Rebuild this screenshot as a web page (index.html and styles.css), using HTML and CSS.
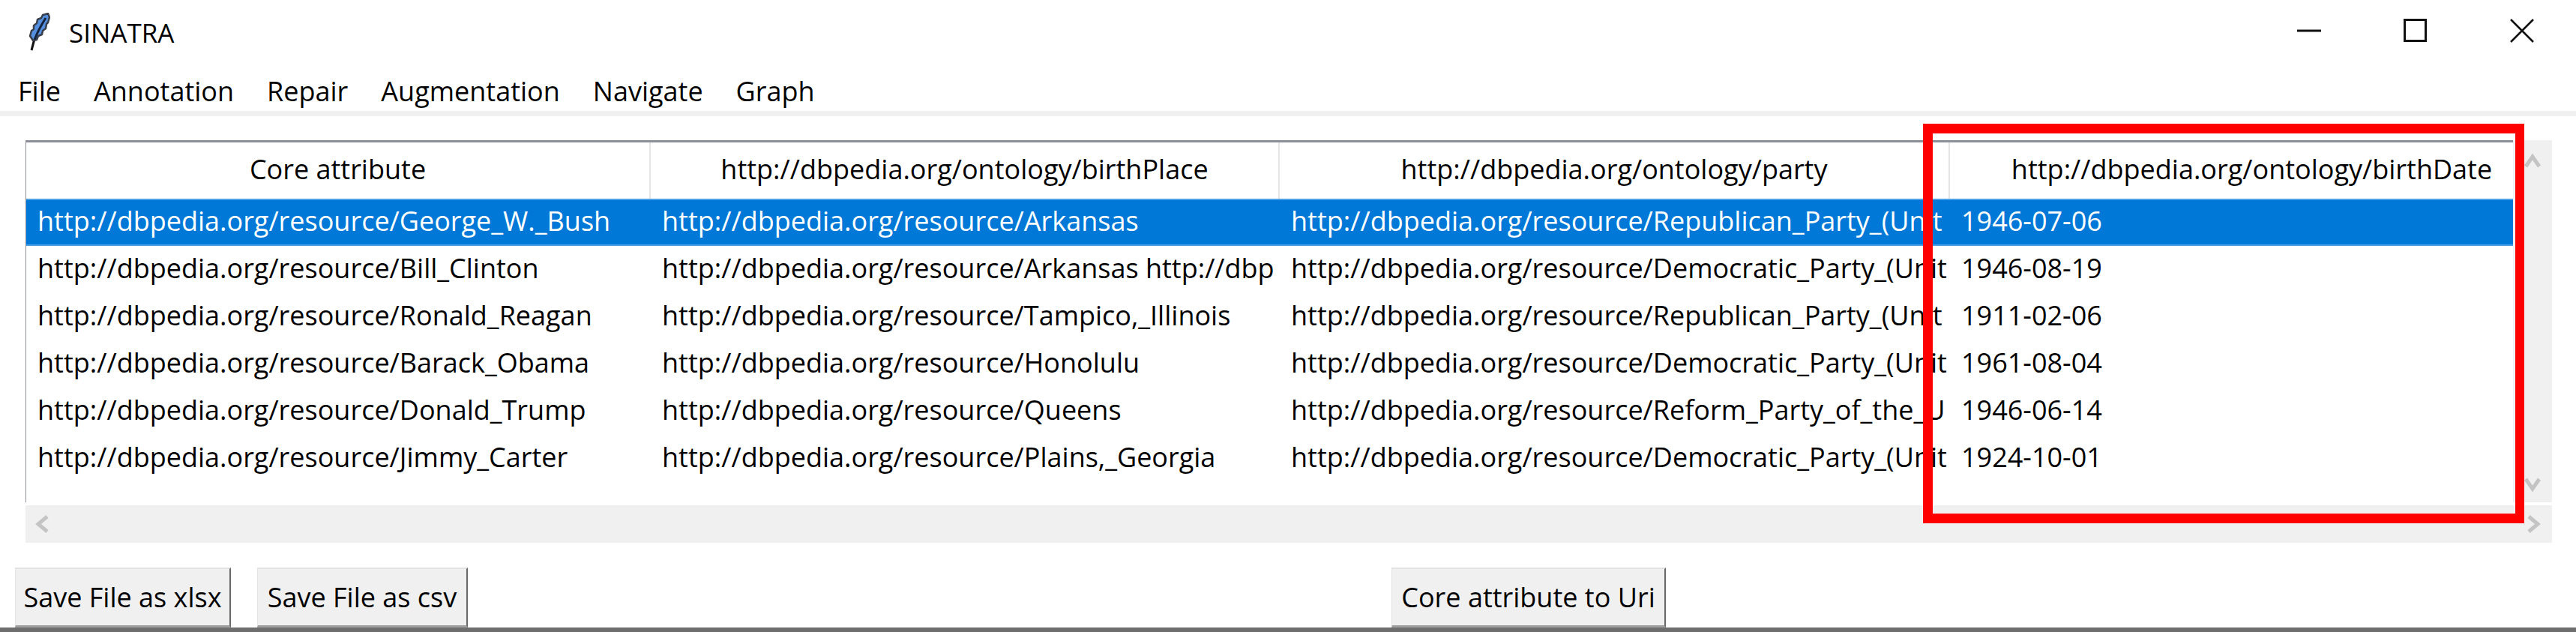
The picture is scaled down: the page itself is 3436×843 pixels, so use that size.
FILE: index.html
```html
<!DOCTYPE html>
<html lang="en">
<head>
  <meta charset="UTF-8">
  <title>SINATRA</title>
  <link rel="stylesheet" href="styles.css">
</head>
<body>
<div id="window">
  <div class="titlebar">
    <svg class="app-icon" width="30" height="52" viewBox="0 0 30 52">
      <path d="M5 50 L9 35" stroke="#111" stroke-width="3" fill="none"/>
      <path d="M7 37 L3 31 L5 24 L8 22 L8 17 L12 14 L13 9 L18 7 L20 3 L27 1 L29 6 L27 13 L25 15 L24 21 L20 24 L19 29 L14 31 L12 36 Z" fill="#5590e0" stroke="#39404c" stroke-width="2.5" stroke-linejoin="round"/>
      <path d="M9 36 C12 28 17 18 24 7" stroke="#16243c" stroke-width="3" fill="none"/>
    </svg>
    <span class="app-title">SINATRA</span>
    <div class="win-buttons">
      <svg width="32" height="32" viewBox="0 0 32 32"><path d="M0 16 H32" stroke="#111" stroke-width="3"/></svg>
      <svg width="32" height="32" viewBox="0 0 32 32"><rect x="1.5" y="1.5" width="28" height="28" fill="none" stroke="#111" stroke-width="3"/></svg>
      <svg width="32" height="32" viewBox="0 0 32 32"><path d="M1 1 L31 31 M31 1 L1 31" stroke="#111" stroke-width="2.5"/></svg>
    </div>
  </div>
  <div class="menubar">
    <span class="menu-item">File</span>
    <span class="menu-item">Annotation</span>
    <span class="menu-item">Repair</span>
    <span class="menu-item">Augmentation</span>
    <span class="menu-item">Navigate</span>
    <span class="menu-item">Graph</span>
  </div>

  <div class="table-area">
    <div class="table-row">
      <div class="tree">
        <div class="row head">
          <div class="cell c1">Core attribute</div>
          <div class="cell c2">http://dbpedia.org/ontology/birthPlace</div>
          <div class="cell c3">http://dbpedia.org/ontology/party</div>
          <div class="cell c4">http://dbpedia.org/ontology/birthDate</div>
        </div>
        <div class="row selected">
          <div class="cell c1">http://dbpedia.org/resource/George_W._Bush</div>
          <div class="cell c2">http://dbpedia.org/resource/Arkansas</div>
          <div class="cell c3">http://dbpedia.org/resource/Republican_Party_(Unit</div>
          <div class="cell c4">1946-07-06</div>
        </div>
        <div class="row">
          <div class="cell c1">http://dbpedia.org/resource/Bill_Clinton</div>
          <div class="cell c2">http://dbpedia.org/resource/Arkansas http://dbp</div>
          <div class="cell c3">http://dbpedia.org/resource/Democratic_Party_(Unit</div>
          <div class="cell c4">1946-08-19</div>
        </div>
        <div class="row">
          <div class="cell c1">http://dbpedia.org/resource/Ronald_Reagan</div>
          <div class="cell c2">http://dbpedia.org/resource/Tampico,_Illinois</div>
          <div class="cell c3">http://dbpedia.org/resource/Republican_Party_(Unit</div>
          <div class="cell c4">1911-02-06</div>
        </div>
        <div class="row">
          <div class="cell c1">http://dbpedia.org/resource/Barack_Obama</div>
          <div class="cell c2">http://dbpedia.org/resource/Honolulu</div>
          <div class="cell c3">http://dbpedia.org/resource/Democratic_Party_(Unit</div>
          <div class="cell c4">1961-08-04</div>
        </div>
        <div class="row">
          <div class="cell c1">http://dbpedia.org/resource/Donald_Trump</div>
          <div class="cell c2">http://dbpedia.org/resource/Queens</div>
          <div class="cell c3">http://dbpedia.org/resource/Reform_Party_of_the_U</div>
          <div class="cell c4">1946-06-14</div>
        </div>
        <div class="row">
          <div class="cell c1">http://dbpedia.org/resource/Jimmy_Carter</div>
          <div class="cell c2">http://dbpedia.org/resource/Plains,_Georgia</div>
          <div class="cell c3">http://dbpedia.org/resource/Democratic_Party_(Unit</div>
          <div class="cell c4">1924-10-01</div>
        </div>
      </div>
      <div class="vscroll">
        <svg width="24" height="20" viewBox="0 0 24 20"><path d="M3 17 L12 4 L21 17" fill="none" stroke="#c4c4c4" stroke-width="5"/></svg>
        <svg width="24" height="20" viewBox="0 0 24 20"><path d="M3 3 L12 16 L21 3" fill="none" stroke="#c4c4c4" stroke-width="5"/></svg>
      </div>
    </div>
    <div class="hscroll">
      <svg width="20" height="24" viewBox="0 0 20 24"><path d="M17 2 L5 12 L17 22" fill="none" stroke="#c4c4c4" stroke-width="5"/></svg>
      <svg width="20" height="24" viewBox="0 0 20 24"><path d="M3 2 L15 12 L3 22" fill="none" stroke="#c4c4c4" stroke-width="5"/></svg>
    </div>
  </div>

  <div class="button-bar">
    <button class="btn save-xlsx">Save File as xlsx</button>
    <button class="btn save-csv">Save File as csv</button>
    <button class="btn to-uri">Core attribute to Uri</button>
  </div>

  <div class="highlight"></div>
</div>
</body>
</html>
```

FILE: styles.css
```css
html, body {
  margin: 0;
  padding: 0;
  background-color: #fff;
}

#window {
  position: relative;
  width: 3436px;
  height: 843px;
  overflow: hidden;
  font-family: "Open Sans", sans-serif;
  font-size: 36px;
  color: #000;
  display: flex;
  flex-direction: column;
}

.titlebar {
  height: 86px;
  display: flex;
  align-items: center;
  padding-left: 37px;
  box-sizing: border-box;
}

.app-icon {
  margin-right: 25px;
}

.app-title {
  font-size: 35px;
}

.win-buttons {
  margin-left: auto;
  margin-right: 56px;
  display: flex;
  gap: 110px;
  margin-top: -4px;
}

.menubar {
  height: 62px;
  display: flex;
  align-items: center;
  padding-left: 24px;
  border-bottom: 7px solid #f0f0f0;
  gap: 44px;
}

.menu-item {
  margin-top: 8px;
}

.table-area {
  margin: 32px 0 0 34px;
  width: 3370px;
}

.table-row {
  display: flex;
  height: 483px;
}

.tree {
  width: 3318px;
  border-left: 1px solid #8a8f99;
  border-top: 3px solid #8a8f99;
  box-sizing: border-box;
}

.row {
  display: flex;
  height: 63px;
  line-height: 60px;
}

.head {
  height: 75px;
  line-height: 72px;
}

.cell {
  box-sizing: border-box;
  white-space: nowrap;
  overflow: hidden;
  padding-left: 15px;
}

.c1 { width: 833px; }
.c2 { width: 839px; }
.c3 { width: 894px; }
.c4 { width: 751px; }

.head .cell {
  text-align: center;
  padding-left: 0;
  border-right: 2px solid #e5e5e5;
}

.head .c4 {
  border-right: none;
  padding-left: 54px;
}

.selected {
  background-color: #0078d7;
  color: #fff;
  box-shadow: inset 0 2px 0 #4d9fe3, inset 0 -2px 0 #4d9fe3;
}

.vscroll {
  width: 52px;
  background-color: #f0f0f0;
  display: flex;
  flex-direction: column;
  justify-content: space-between;
  align-items: flex-end;
  padding: 18px 14px 14px 0;
  box-sizing: border-box;
}

.hscroll {
  height: 50px;
  margin-top: 4px;
  background-color: #f0f0f0;
  display: flex;
  align-items: center;
  justify-content: space-between;
  padding: 0 14px 0 12px;
}

.button-bar {
  flex: 1;
  display: flex;
  align-items: flex-end;
  padding-left: 20px;
  margin-top: 33px;
  border-bottom: 6px solid #6e6e6e;
}

.btn {
  height: 80px;
  padding: 0;
  font: inherit;
  color: #000;
  background-color: #f0f0f0;
  border: none;
  border-top: 2px solid #e3e3e3;
  border-left: 1px solid #e3e3e3;
  border-right: 2px solid #696969;
  border-bottom: 3px solid #a0a0a0;
  box-sizing: border-box;
}

.save-xlsx { width: 288px; }
.save-csv { width: 281px; margin-left: 35px; }
.to-uri { width: 366px; margin-left: 1232px; }

.highlight {
  position: absolute;
  left: 2565px;
  top: 165px;
  width: 802px;
  height: 533px;
  box-sizing: border-box;
  border: 13px solid #f00;
  border-right-width: 12px;
}
```
